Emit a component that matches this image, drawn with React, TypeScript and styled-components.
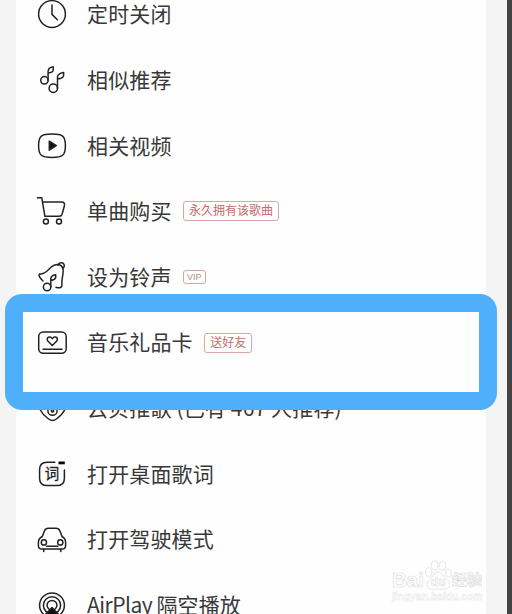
import React from 'react'
import styled, { createGlobalStyle } from 'styled-components'

const GlobalStyle = createGlobalStyle`
  * {
    box-sizing: border-box;
  }

  body {
    margin: 0;
    overflow: hidden;
    background: #f4f4f4;
    font-family: 'Liberation Sans', 'Noto Sans CJK SC', sans-serif;
  }
`

const ClockIcon = () => (
  <>
    <circle cx="22" cy="22" r="13.4" />
    <path d="M22 13v9.4l5.4 5.4" />
  </>
)

const NotesIcon = () => (
  <>
    <circle cx="14.4" cy="22.3" r="3.7" />
    <path d="M18.1 22.3V13.5q0-4 5.1-4.8v3q0 2.6-5.1 3.4" />
    <circle cx="23.3" cy="30.3" r="4.2" />
    <path d="M27.5 30.3V19q0-3.6 6.1-4.6v3.2q0 2.7-6.1 3.5" />
  </>
)

const VideoIcon = () => (
  <>
    <path d="M22 10c10.500 0 13.400 1.800 13.400 11.700S32.500 33.400 22 33.400 8.600 31.600 8.600 21.700 11.500 10 22 10z" />
    <path d="M19.300 17.200v9l7-4.500z" fill="#111" />
  </>
)

const CartIcon = () => (
  <>
    <path d="M7.400 8.800h4.400l3.100 18.500h14.300q2.200 0 2.900-2l2.300-8.600q.7-3.600-2.600-3.600H12.500" />
    <circle cx="15.900" cy="32.400" r="2.500" />
    <circle cx="29" cy="32.400" r="2.500" />
  </>
)

const BellIcon = () => (
  <>
    <path d="M13 26C10 23.100 8 20.100 9.800 19c6 .3 8-4.400 12-7.400 4.200-3.100 9.500-3 11 1.600 1.500 4.800-1.600 10.400-.9 15.800.4 3.800-2.100 4.500-5.900 3.200" />
    <path d="M27.900 10.300c.8-3 5.400-3.500 6.200-.6.500 1.700-.3 3-1.500 3.700" />
    <circle cx="17.100" cy="32" r="3.700" />
    <path d="M20.800 32V23.500q.3-2.900 4.900-3.700v2.700q-.6 2.300-4.900 3" />
  </>
)

const GiftCardIcon = () => (
  <>
    <rect x="8.700" y="11" width="27.500" height="21.300" rx="4.500" />
    <path d="M22.300 24.500l-4.500-4.500c-2.200-3.500 2.300-5.600 4.500-2.400 2.200-3.200 6.700-1.100 4.500 2.400z" />
    <path d="M13 28.300h19" />
  </>
)

const RecommendIcon = () => (
  <>
    <path d="M9.600 23q3.200 6 9 10 3.900 3 7.800 0 5.800-4 8.900-10Q36 9 22.400 9T9.600 23z" />
    <circle cx="22.500" cy="24.700" r="4.600" />
    <circle cx="22.500" cy="24.700" r="1.200" />
  </>
)

const LyricsIcon = () => (
  <>
    <path d="M24.800 10.200H17q-7.400 0-7.400 7.400v8.600q0 7.400 7.400 7.400h10q7.400 0 7.400-7.400v-8.200" />
    <path d="M28.500 10.900h6.300" strokeWidth="2.800" strokeLinecap="butt" stroke="#000" />
    <IconText x="21.900" y="27.300">词</IconText>
  </>
)

const CarIcon = () => (
  <>
    <path d="M12.300 18.500l2.100-5.600q1-2.700 4-2.700h7.500q3 0 4 2.700l2.100 5.600q3.600 2 3.600 5.800v3.500q0 3.300-3.600 3.300H12q-3.600 0-3.600-3.300v-3.500q0-3.800 3.900-5.800z" />
    <circle cx="13.900" cy="24.400" r="2.600" />
    <circle cx="30.300" cy="24.400" r="2.600" />
    <path d="M16.700 28.200h11M13.700 31.500v2M30.800 31.500v2" />
  </>
)

const AirPlayIcon = () => (
  <>
    <circle cx="22" cy="22.300" r="12.400" />
    <circle cx="22" cy="22.300" r="8.600" />
    <circle cx="22" cy="22.300" r="4.900" />
    <path d="M22 24.500L29 32H15z" fill="#111" />
  </>
)

interface MenuItem {
  label: string
  icon: React.FC
  tag?: string
  small?: boolean
  latin?: string
}

const items: MenuItem[] = [
  { label: '定时关闭', icon: ClockIcon },
  { label: '相似推荐', icon: NotesIcon },
  { label: '相关视频', icon: VideoIcon },
  { label: '单曲购买', icon: CartIcon, tag: '永久拥有该歌曲' },
  { label: '设为铃声', icon: BellIcon, tag: 'VIP', small: true },
  { label: '音乐礼品卡', icon: GiftCardIcon, tag: '送好友' },
  { label: '云贝推歌 (已有 467 人推荐)', icon: RecommendIcon },
  { label: '打开桌面歌词', icon: LyricsIcon },
  { label: '打开驾驶模式', icon: CarIcon },
  { latin: 'AirPlay ', label: '隔空播放', icon: AirPlayIcon },
]

const App: React.FC = () => {
  return (
    <Screen>
      <GlobalStyle />
      <Menu>
        {items.map(({ label, latin, icon: Glyph, tag, small }) => (
          <Row key={label}>
            <Icon viewBox="0 0 44 44">
              <Glyph />
            </Icon>
            <Label>
              {latin && <Latin>{latin}</Latin>}
              {label}
            </Label>
            {tag && <Tag $small={small}>{tag}</Tag>}
          </Row>
        ))}
      </Menu>
      <Highlight />
      <Watermark>
        <Brand>
          <span>Bai</span>
          <Paw viewBox="0 0 28 30">
            <ellipse cx="4.700" cy="12" rx="3.200" ry="4.200" />
            <ellipse cx="10.500" cy="5.300" rx="3.300" ry="4.500" />
            <ellipse cx="18.500" cy="5.700" rx="3.300" ry="4.500" />
            <ellipse cx="24.500" cy="13" rx="3" ry="4" />
            <path d="M14 12q4 0 6.500 5c2 3 5 4 5 7.500 0 6-7 4.500-11.500 4.500s-11 1.500-11-4.500c0-3.500 3-4.500 5-7.500q2-5 6-5z" />
            <text x="14.200" y="26" textAnchor="middle">du</text>
          </Paw>
          <span>经验</span>
        </Brand>
        <Site>jingyan.baidu.com</Site>
      </Watermark>
    </Screen>
  )
}

const Screen = styled.div`
  position: relative;
  height: 614px;
  padding: 0 21px 0 16px;
  border-right: 5px solid #444;
  background: #f4f4f4;
  overflow: hidden;
`

const Menu = styled.ul`
  height: 614px;
  margin: 0;
  padding: 0;
  list-style: none;
  background: #fefefe;
  overflow: hidden;

  /* the list is scrolled part way into its first row */
  &::before {
    content: '';
    display: block;
    margin-top: -18.4px;
  }
`

const Row = styled.li`
  display: flex;
  align-items: center;
  height: 65.65px;
  padding-left: 14px;
`

const Icon = styled.svg`
  flex: none;
  width: 44px;
  height: 44px;
  margin-right: 13px;
  fill: none;
  stroke: #222;
  stroke-width: 1.5;
  stroke-linecap: round;
  stroke-linejoin: round;
`

const IconText = styled.text`
  fill: #222;
  stroke: #222;
  stroke-width: 0.3;
  font-size: 14.5px;
  text-anchor: middle;
`

const Label = styled.span`
  padding-bottom: 2.4px;
  color: #383838;
  font-family: 'Noto Sans CJK SC', sans-serif;
  font-size: 21px;
  line-height: 26px;
  letter-spacing: 0.15px;
  white-space: pre;
`

const Latin = styled.span`
  letter-spacing: -0.5px;
`

const Tag = styled.span<{ $small?: boolean }>`
  height: ${(props) => (props.$small ? 14 : 20)}px;
  margin-left: 11.5px;
  padding: 0 ${(props) => (props.$small ? 3 : 5)}px;
  border: 1px solid ${(props) => (props.$small ? '#d3a79f' : '#dba6a6')};
  border-radius: 3px;
  color: ${(props) => (props.$small ? '#c08a80' : '#c26c6c')};
  font-size: ${(props) => (props.$small ? 9 : 12)}px;
  line-height: ${(props) => (props.$small ? 13 : 19)}px;
  white-space: nowrap;
`

const Highlight = styled.div`
  position: absolute;
  top: 293.5px;
  left: 4.5px;
  width: 492.5px;
  height: 116.5px;
  border: 18px solid #50affa;
  border-radius: 17px;
`

const Watermark = styled.div`
  position: absolute;
  top: 559px;
  left: 392px;
  width: 92px;
  color: #fff;
`

const Brand = styled.div`
  display: flex;
  align-items: flex-end;
  height: 31px;
  font-size: 20.5px;
  font-weight: 700;
  line-height: 20px;
  -webkit-text-stroke: 0.7px #dedede;

  span:last-child {
    font-size: 15px;
  }
`

const Paw = styled.svg`
  flex: none;
  width: 28px;
  height: 30px;
  fill: #fff;
  stroke: #dedede;
  stroke-width: 0.8;

  text {
    font-size: 12px;
    font-weight: 700;
    stroke-width: 0.6;
  }
`

const Site = styled.div`
  color: #fff;
  font-size: 10.3px;
  line-height: 14px;
  font-weight: 700;
  -webkit-text-stroke: 0.4px #e4e4e4;
`

export default App
